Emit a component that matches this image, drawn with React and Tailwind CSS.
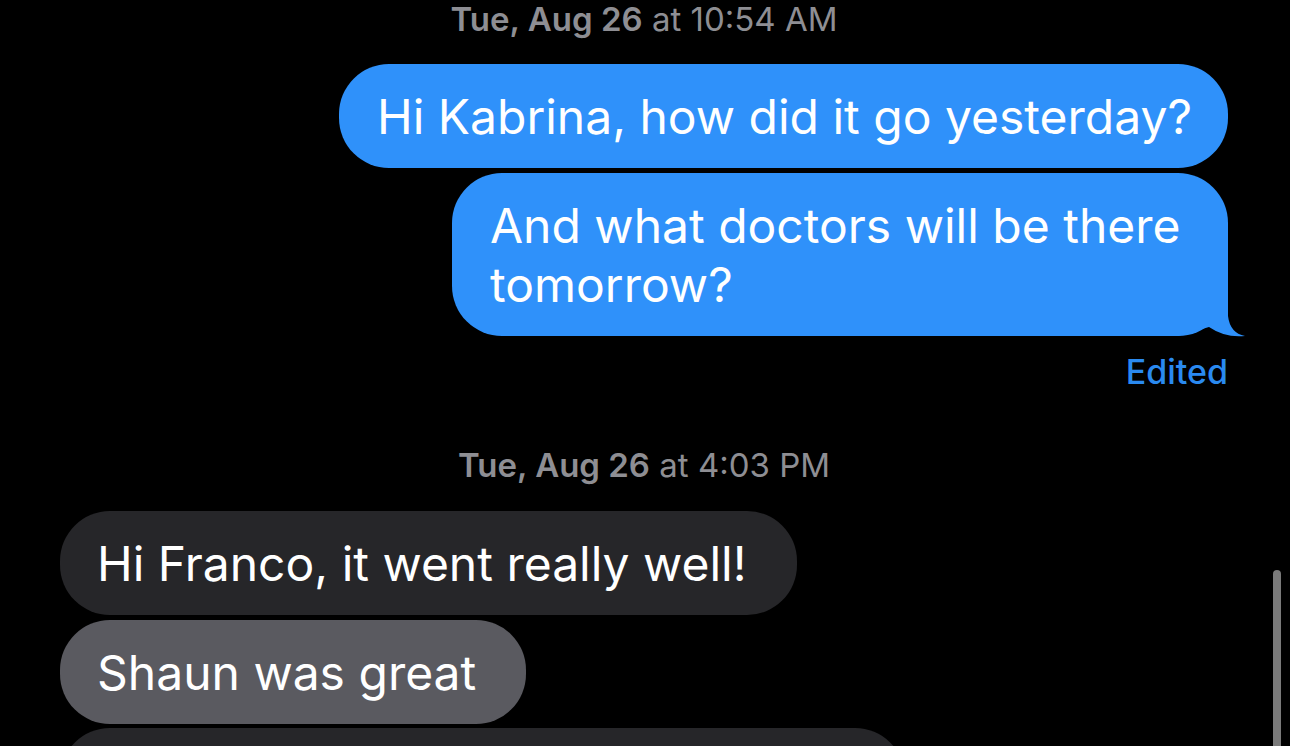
import React from 'react'

const font = { fontFamily: 'Inter, "Noto Sans", sans-serif' }

function Stamp({ day, time, className }) {
  return (
    <div className={`text-center text-[33px] leading-[34px] text-[#8e8e93] ${className}`}>
      <span className="font-semibold">{day}</span>
      <span className="font-normal"> at {time}</span>
    </div>
  )
}

function Sent({ children, tail, className = '' }) {
  return (
    <div className={`relative self-end rounded-[50px] bg-[#2f91fa] pl-[38px] pr-[36px] pt-[23px] pb-[22px] text-[48px] leading-[59px] text-white ${className}`}>
      {children}
      {tail && (
        <svg
          className="absolute bottom-0 right-[-17px] overflow-visible"
          width="67"
          height="50"
          viewBox="0 0 67 50"
        >
          <path d="M50 0 L50 30 Q52 47 67 50 Q47 52 31 41 L0 50 L0 0 Z" fill="#2f91fa" />
        </svg>
      )}
    </div>
  )
}

function Received({ children, light, className = '' }) {
  return (
    <div
      className={`self-start whitespace-nowrap rounded-[50px] pl-[37px] pr-[50px] pt-[23px] pb-[22px] text-[48px] leading-[59px] text-white ${
        light ? 'bg-[#5a5a60]' : 'bg-[#262629]'
      } ${className}`}
    >
      {children}
    </div>
  )
}

export default function App() {
  return (
    <div className="relative h-[746px] w-[1290px] overflow-hidden bg-black" style={font}>
      <div className="flex flex-col pl-[60px] pr-[62px]">
        <Stamp day="Tue, Aug 26" time="10:54 AM" className="pt-[2px]" />

        <Sent className="mt-[28px] whitespace-nowrap">Hi Kabrina, how did it go yesterday?</Sent>
        <Sent tail className="mt-[5px] w-[776px]">
          And what doctors will be there
          <br />
          tomorrow?
        </Sent>
        <div className="mt-[17px] self-end text-[34px] font-medium leading-[38px] text-[#2a8af0]">Edited</div>

        <Stamp day="Tue, Aug 26" time="4:03 PM" className="mt-[57px]" />

        <Received className="mt-[29px]">Hi Franco, it went really well!</Received>
        <Received light className="mt-[5px]">Shaun was great</Received>
        <Received className="mt-[4px] w-[845px]">&nbsp;</Received>
      </div>

      {/* scroll indicator */}
      <div className="absolute right-[9px] top-[570px] h-[220px] w-[8px] rounded-full bg-[#7a7a7a]" />
    </div>
  )
}
